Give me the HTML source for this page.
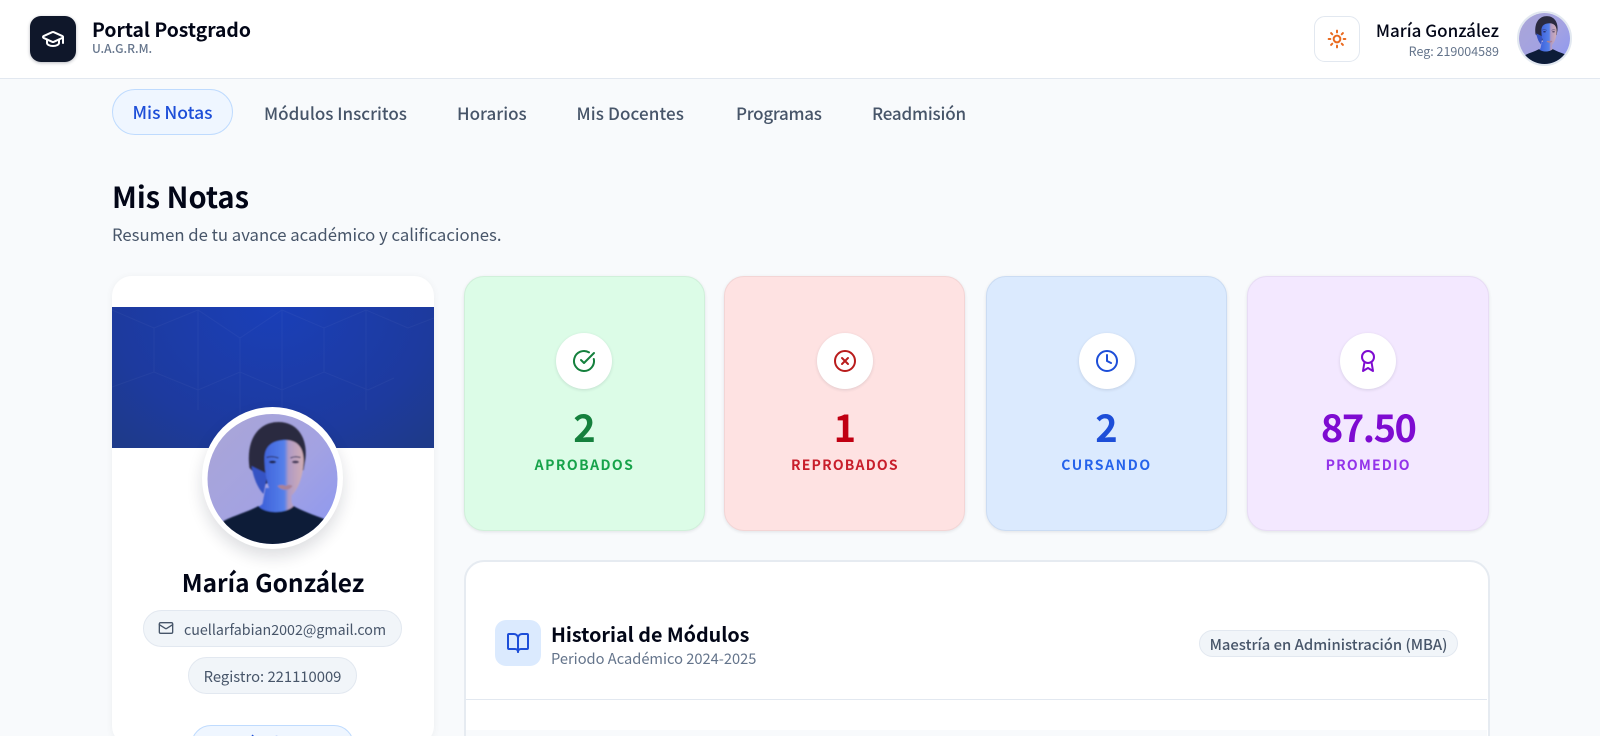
<!DOCTYPE html>
<html lang="es">
<head>
<meta charset="utf-8">
<title>Portal Postgrado</title>
<style>
html,body{margin:0;padding:0;width:1600px;height:736px;overflow:hidden;background:#f8fafc}
body{position:relative;font-family:"Noto Sans CJK JP","Liberation Sans",sans-serif;color:#0f172a}
.a{position:absolute;box-sizing:border-box}
.t{position:absolute;white-space:nowrap}
.c{text-align:center;transform:translateX(-50%)}
.r{text-align:right}
svg{display:block}
.stat{position:absolute;box-sizing:border-box;top:276px;width:241px;height:255px;border-radius:20px;box-shadow:0 1px 3px rgba(15,23,42,.1)}
.ic{position:absolute;left:50%;margin-left:-28px;top:56px;width:56px;height:56px;border-radius:50%;background:#fff;box-shadow:0 1px 3px rgba(15,23,42,.12);display:flex;align-items:center;justify-content:center}
.num{position:absolute;left:0;width:100%;top:127px;text-align:center;font-size:38px;line-height:44px;font-weight:700}
.lab{position:absolute;left:0;width:100%;top:179px;text-align:center;font-size:14px;line-height:18px;font-weight:700;letter-spacing:1.2px}
.nav{font-size:17px;line-height:24px;top:101px;color:#475569;font-weight:500}
</style>
</head>
<body>
<svg width="0" height="0" style="position:absolute">
  <defs>
    <linearGradient id="bg" x1="0" y1="0" x2="1" y2="1"><stop offset="0" stop-color="#aaa6d6"/><stop offset=".55" stop-color="#a3a2e2"/><stop offset="1" stop-color="#8b97f2"/></linearGradient>
    <linearGradient id="fc" gradientUnits="userSpaceOnUse" x1="55" y1="0" x2="97" y2="0"><stop offset="0" stop-color="#3f62da"/><stop offset=".52" stop-color="#5580ea"/><stop offset=".62" stop-color="#b09ac4"/><stop offset="1" stop-color="#d3afb4"/></linearGradient>
    <clipPath id="cc"><circle cx="65" cy="65" r="65"/></clipPath>
    <filter id="sf"><feGaussianBlur stdDeviation=".8"/></filter>
    <symbol id="face" viewBox="0 0 130 130">
      <g clip-path="url(#cc)">
        <rect width="130" height="130" fill="url(#bg)"/>
        <g filter="url(#sf)">
        <path d="M42 54C38 24 52 8 71 8c19 0 29 16 27 36l-2 12-38 14z" fill="#2c2a40"/>
        <path d="M44 52c2 12 6 22 12 28l4-20z" fill="#3553c4"/>
        <path d="M58 74l-3 16-4 3c7 13 29 13 35 0l-2-5v-14z" fill="url(#fc)"/>
        <path d="M57 44c0-14 11-18 21-18 12 0 18 8 18 20 0 16-6 32-14 37-5 3-11 3-15 0-6-6-10-21-10-39z" fill="url(#fc)"/>
        <path d="M59 43.500c4-1.500 8-1 12 .5M83 44c3-1.500 7-1.500 10-.5" stroke="#2c2c58" stroke-width="1" fill="none"/>
        <ellipse cx="65" cy="48" rx="3.500" ry="1.400" fill="#1f2048"/><ellipse cx="88" cy="48" rx="3.500" ry="1.400" fill="#3f3658"/>
        <path d="M70 72c3-1.500 6-1.500 8 0 3-1.500 5-1.500 7 0-3 5-11 5-15 0z" fill="#a98298"/>
        <path d="M16 107C28 101 40 98 51 92c6 8 28 8 35 0 9 5 20 9 31 13l6 30H10z" fill="#101b38"/>
        </g>
      </g>
    </symbol>
  </defs>
</svg>

<!-- header -->
<div class="a" style="left:0;top:0;width:1600px;height:79px;background:#fff;border-bottom:1px solid #e2e8f0"></div>
<div class="a" style="left:30px;top:16px;width:46px;height:46px;border-radius:11px;background:#0f172a;box-shadow:0 1px 3px rgba(15,23,42,.3)">
  <svg style="position:absolute;left:11px;top:11px" width="24" height="24" viewBox="0 0 24 24" fill="none" stroke="#fff" stroke-width="2" stroke-linecap="round" stroke-linejoin="round"><path d="M21.4 10.900a1 1 0 0 0 0-1.840L12.830 5.180a2 2 0 0 0-1.660 0L2.600 9.080a1 1 0 0 0 0 1.830l8.570 3.910a2 2 0 0 0 1.660 0z"/><path d="M22 10v6"/><path d="M6 12.500V16a6 3 0 0 0 12 0v-3.500"/></svg>
</div>
<div class="t" style="left:92px;top:17px;font-size:19.300px;line-height:25px;font-weight:700;color:#020617">Portal Postgrado</div>
<div class="t" style="left:92px;top:42px;font-size:12px;line-height:14px;font-weight:500;color:#64748b">U.A.G.R.M.</div>

<div class="a" style="left:1314px;top:16px;width:46px;height:46px;border-radius:11px;background:#fff;border:1px solid #e2e8f0">
  <svg style="position:absolute;left:12px;top:12px" width="20" height="20" viewBox="0 0 24 24" fill="none" stroke="#ea6a1f" stroke-width="2.400" stroke-linecap="round"><circle cx="12" cy="12" r="4"/><path d="M12 2v2M12 20v2M4.930 4.930l1.410 1.410M17.660 17.660l1.410 1.410M2 12h2M20 12h2M6.340 17.660l-1.410 1.410M19.070 4.930l-1.410 1.410"/></svg>
</div>
<div class="t r" style="right:101px;top:17.500px;font-size:17px;line-height:24px;font-weight:500;color:#020617">María González</div>
<div class="t r" style="right:101px;top:43px;font-size:12.500px;line-height:16px;color:#64748b">Reg: 219004589</div>
<div class="a" style="left:1517px;top:11px;width:55px;height:55px;border-radius:50%;background:#fff;border:2px solid #e2e8f0">
  <svg width="51" height="51"><use href="#face" width="51" height="51"/></svg>
</div>

<!-- nav -->
<div class="a" style="left:112px;top:89px;width:121px;height:46px;border-radius:23px;background:#eff6ff;border:1px solid #bfdbfe"></div>
<div class="t nav" style="left:132.500px;color:#1d4ed8;font-size:17.500px">Mis Notas</div>
<div class="t nav" style="left:264px">Módulos Inscritos</div>
<div class="t nav" style="left:457px">Horarios</div>
<div class="t nav" style="left:576.500px;letter-spacing:.12px">Mis Docentes</div>
<div class="t nav" style="left:736px;letter-spacing:-.3px">Programas</div>
<div class="t nav" style="left:872px;letter-spacing:-.2px">Readmisión</div>

<!-- heading -->
<div class="t" style="left:112px;top:177px;font-size:29.100px;line-height:38px;font-weight:700;color:#020617">Mis Notas</div>
<div class="t" style="left:112px;top:222px;font-size:16.720px;line-height:24px;color:#475569">Resumen de tu avance académico y calificaciones.</div>

<!-- profile card -->
<div class="a" style="left:112px;top:276px;width:322px;height:470px;border-radius:20px;background:#fff;box-shadow:0 1px 8px rgba(15,23,42,.05)"></div>
<div class="a" style="left:112px;top:307px;width:322px;height:141px;background:radial-gradient(ellipse 70% 130% at 50% 0,#1a3fb8 0,#1d3a9e 70%,#1e3a8a 100%);overflow:hidden">
  <svg width="322" height="141" viewBox="0 0 322 141" fill="none" stroke="#fff" stroke-opacity=".04"><path d="M0 3l42 18 44-18 42 28 42-28 42 18 42-18 42 18 26-10M42 21v44M86 3v100M128 31v100M170 3v100M212 21v44M254 3v100M0 80l42-15 44 18 42-18 42 18 42-18 44 18 26-12"/></svg>
</div>
<div class="a" style="left:202px;top:407px;width:141px;height:142px;border-radius:50%;background:#fff;box-shadow:0 8px 16px rgba(15,23,42,.14)"></div>
<svg class="a" style="left:207px;top:414px" width="131" height="130"><use href="#face" width="131" height="130"/></svg>
<div class="t c" style="left:273px;top:567px;font-size:24.450px;line-height:32px;font-weight:700;color:#020617">María González</div>
<div class="a" style="left:143px;top:610px;width:259px;height:37px;border-radius:19px;background:#f1f5f9;border:1px solid #e2e8f0"></div>
<svg class="a" style="left:158px;top:620px" width="16" height="16" viewBox="0 0 24 24" fill="none" stroke="#475569" stroke-width="2" stroke-linecap="round" stroke-linejoin="round"><rect x="2" y="4" width="20" height="16" rx="2"/><path d="M22 7l-8.970 5.700a1.940 1.940 0 0 1-2.060 0L2 7"/></svg>
<div class="t" style="left:184px;top:619.500px;font-size:14.250px;line-height:20px;color:#475569">cuellarfabian2002@gmail.com</div>
<div class="a" style="left:188px;top:657px;width:169px;height:37px;border-radius:19px;background:#f1f5f9;border:1px solid #e2e8f0"></div>
<div class="t c" style="left:272.500px;top:666.500px;font-size:14.800px;line-height:20px;color:#475569">Registro: 221110009</div>
<div class="a" style="left:191px;top:725px;width:163px;height:40px;border-radius:20px;background:#eff6ff;border:1px solid #bfdbfe"></div>
<div class="t" style="left:234px;top:733px;font-size:15px;line-height:20px;color:#1d4ed8;font-weight:500">Módulos activos</div>

<!-- stats -->
<div class="stat" style="left:464px;background:#dcfce7;border:1px solid #d0f0da">
  <div class="ic" style="margin-left:-29px"><svg width="24" height="24" viewBox="0 0 24 24" fill="none" stroke="#15803d" stroke-width="2" stroke-linecap="round" stroke-linejoin="round"><path d="M21.800 10A10 10 0 1 1 17 3.340"/><path d="M9 11l3 3L22 4"/></svg></div>
  <div class="num" style="color:#15803d">2</div><div class="lab" style="color:#16a34a;letter-spacing:1.45px">APROBADOS</div>
</div>
<div class="stat" style="left:724.400px;background:#fee2e2;border:1px solid #f3d5d5">
  <div class="ic"><svg width="24" height="24" viewBox="0 0 24 24" fill="none" stroke="#b91c1c" stroke-width="2" stroke-linecap="round"><circle cx="12" cy="12" r="10"/><path d="M15 9l-6 6M9 9l6 6"/></svg></div>
  <div class="num" style="color:#c00012">1</div><div class="lab" style="color:#c81e2b">REPROBADOS</div>
</div>
<div class="stat" style="left:986px;background:#dbeafe;border:1px solid #cbdcf3">
  <div class="ic"><svg width="24" height="24" viewBox="0 0 24 24" fill="none" stroke="#1d4ed8" stroke-width="2" stroke-linecap="round" stroke-linejoin="round"><circle cx="12" cy="12" r="10"/><path d="M12 6v6l4 2"/></svg></div>
  <div class="num" style="color:#1d4ed8">2</div><div class="lab" style="color:#2563eb;letter-spacing:1.6px">CURSANDO</div>
</div>
<div class="stat" style="left:1247.400px;width:241.600px;background:#f3e8ff;border:1px solid #e8dcf5">
  <div class="ic"><svg width="24" height="24" viewBox="0 0 24 24" fill="none" stroke="#7e0bd1" stroke-width="2" stroke-linecap="round" stroke-linejoin="round"><circle cx="12" cy="8" r="6"/><path d="M15.480 12.890L17 22l-5-3-5 3 1.520-9.110"/></svg></div>
  <div class="num" style="color:#7e0bd1;letter-spacing:-1.500px">87.50</div><div class="lab" style="color:#9333ea">PROMEDIO</div>
</div>

<!-- table card -->
<div class="a" style="left:463.500px;top:560px;width:1026px;height:200px;border-radius:20px;background:#fff;border:2px solid #e6ebf1"></div>
<div class="a" style="left:466px;top:699px;width:1021px;height:1px;background:#e2e8f0"></div>
<div class="a" style="left:466px;top:730px;width:1021px;height:6px;background:#f8fafc"></div>
<div class="a" style="left:495px;top:620px;width:46px;height:46px;border-radius:11px;background:#dbeafe">
  <svg style="position:absolute;left:11px;top:11px" width="24" height="24" viewBox="0 0 24 24" fill="none" stroke="#1d4ed8" stroke-width="2" stroke-linecap="round" stroke-linejoin="round"><path d="M12 7v14"/><path d="M3 18a1 1 0 0 1-1-1V4a1 1 0 0 1 1-1h5a4 4 0 0 1 4 4 4 4 0 0 1 4-4h5a1 1 0 0 1 1 1v13a1 1 0 0 1-1 1h-6a3 3 0 0 0-3 3 3 3 0 0 0-3-3z"/></svg>
</div>
<div class="t" style="left:551px;top:620.500px;font-size:19.700px;line-height:26px;font-weight:700;color:#020617">Historial de Módulos</div>
<div class="t" style="left:551px;top:649px;font-size:14.650px;line-height:20px;color:#64748b">Periodo Académico 2024-2025</div>
<div class="a" style="left:1199px;top:630px;width:259px;height:27px;border-radius:14px;background:#f1f5f9;border:1px solid #e2e8f0"></div>
<div class="t c" style="left:1328.500px;top:635px;font-size:14.830px;line-height:19px;font-weight:500;color:#475569">Maestría en Administración (MBA)</div>
</body>
</html>
